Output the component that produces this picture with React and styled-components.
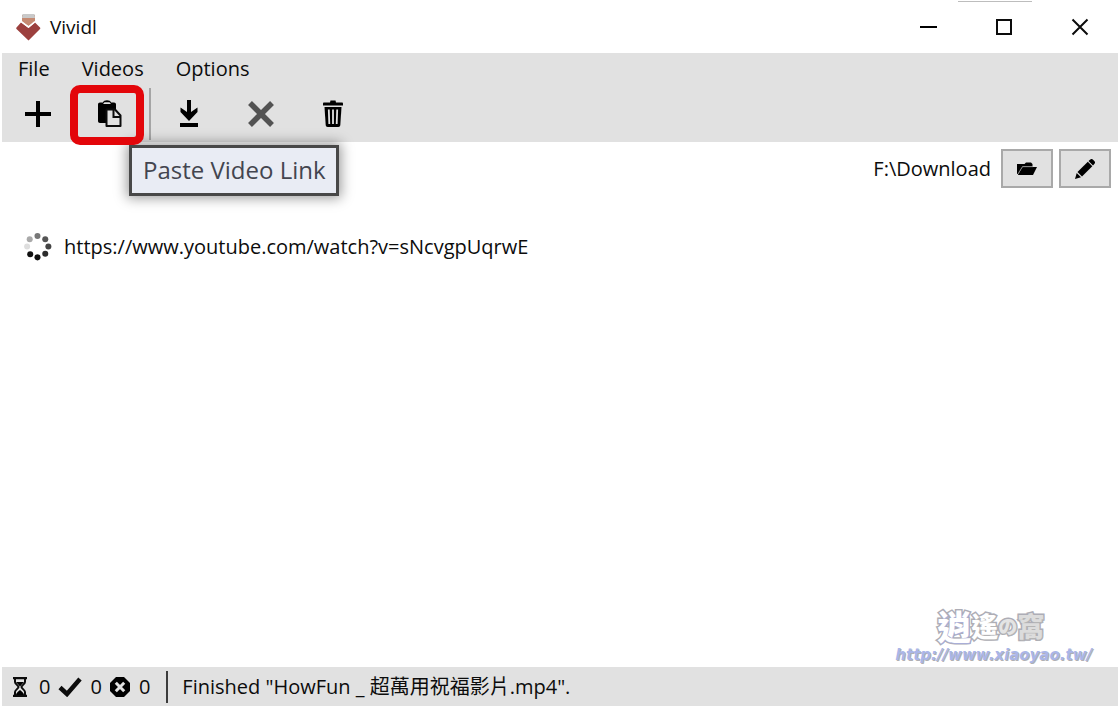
import React from "react";
import styled, { createGlobalStyle } from "styled-components";

const GlobalStyle = createGlobalStyle`
  * {
    box-sizing: border-box;
  }

  body {
    margin: 0;
    background: #ffffff;
    color: #0c0c0c;
    font-family: "Open Sans", "Noto Sans CJK TC", sans-serif;
    font-size: 20px;
    line-height: 28px;
  }

  button {
    padding: 0;
    border: none;
    background: none;
    color: inherit;
    font: inherit;
  }

  svg {
    display: block;
    flex: none;
  }
`;

const Window = styled.div`
  display: flex;
  flex-direction: column;
  min-height: 100vh;
  padding: 0 2px 2px;
`;

const TitleBar = styled.header`
  display: flex;
  align-items: center;
  height: 53px;
  padding-left: 13px;
`;

const Title = styled.h1`
  flex: 1;
  margin: 0 0 0 9px;
  font-size: 19px;
  font-weight: 400;
`;

const CaptionButton = styled.button`
  position: relative;
  display: flex;
  align-items: center;
  justify-content: center;
  width: 76px;
  height: 53px;

  &::before {
    content: "";
    position: absolute;
    top: 1px;
    left: -8px;
    width: 74px;
    height: 1px;
    background: ${(props) => (props.$edge ? "#bdbdbd" : "transparent")};
  }
`;

const Bars = styled.div`
  background: #e1e1e1;
`;

const MenuBar = styled.nav`
  display: flex;
  height: 32px;
`;

const MenuItem = styled.button`
  padding: 0 16px;
`;

const ToolBar = styled.div`
  display: flex;
  align-items: center;
  height: 57px;
`;

const ToolSlot = styled.div`
  position: relative;
`;

const ToolButton = styled.button`
  display: flex;
  align-items: center;
  justify-content: center;
  width: 72px;
  height: 57px;
`;

const Separator = styled.div`
  width: 2px;
  height: 52px;
  margin: 0 2px 0 3px;
  background: #a5a5a5;
`;

const Highlight = styled.div`
  position: absolute;
  top: 0;
  left: -4px;
  width: 74px;
  height: 60px;
  border: 8px solid #e3060a;
  border-radius: 10px;
  pointer-events: none;
  z-index: 2;
`;

const Tooltip = styled.div`
  position: absolute;
  top: 60px;
  left: 55px;
  padding: 6px 10px 7px 11px;
  border: 3px solid #484848;
  background: #e9ecf4;
  color: #43454f;
  font-size: 24px;
  line-height: 32px;
  white-space: nowrap;
  box-shadow: 0 0 12px 2px rgba(0, 0, 0, 0.4);
  z-index: 1;
`;

const Content = styled.main`
  position: relative;
  display: flex;
  flex: 1;
  flex-direction: column;
`;

const PathRow = styled.div`
  display: flex;
  align-items: center;
  justify-content: flex-end;
  gap: 6px;
  padding: 7px 7px 0;
`;

const Path = styled.span`
  margin-right: 4px;
`;

const PathButton = styled.button`
  display: flex;
  align-items: center;
  justify-content: center;
  width: 52px;
  height: 39px;
  border: 2px solid #a9a9a9;
  background: #e1e1e1;
`;

const VideoList = styled.ul`
  margin: 0;
  padding: 45px 22px;
  list-style: none;
`;

const VideoRow = styled.li`
  display: flex;
  align-items: center;
  gap: 12px;
`;

const Watermark = styled.div`
  position: absolute;
  right: 26px;
  bottom: 1px;
  text-align: center;
`;

const WatermarkName = styled.div`
  display: flex;
  align-items: center;
  justify-content: center;
  padding-right: 6px;
  font-family: "Noto Sans CJK TC", sans-serif;
  font-weight: 900;
  line-height: 36px;
  -webkit-text-stroke: 3px #adadb6;
  paint-order: stroke fill;
`;

const WatermarkChar = styled.span`
  font-size: ${(props) => props.$size}px;
  color: ${(props) => props.$color || "#ffffff"};
  text-shadow: 1px 1px 0 ${(props) => props.$shadow || "#b5b5b5"};
`;

const WatermarkLink = styled.a`
  display: block;
  color: #aab6e8;
  font-family: "DejaVu Sans", sans-serif;
  font-size: 15px;
  font-style: italic;
  font-weight: 700;
  line-height: 22px;
  text-decoration: none;
  text-shadow: 1px 1px 0 #b0b0b4;
`;

const StatusBar = styled.footer`
  display: flex;
  align-items: center;
  height: 39px;
  padding-left: 10px;
  background: #e1e1e1;
`;

const Counter = styled.span`
  display: flex;
  align-items: center;
  gap: ${(props) => props.$gap}px;
  margin-right: 8px;
`;

const StatusDivider = styled.div`
  width: 2px;
  height: 32px;
  margin: 0 14px 0 8px;
  background: #3c3c3c;
`;

const Logo = () => (
  <svg width="26" height="28" viewBox="0 0 26 28">
    <path d="M7 2h13v7l-6.500 4L7 9z" fill="#c58a72" />
    <path d="M7.500 1h12l.5 4H7z" fill="#c9c9c9" />
    <path d="M6 9.500 13.500 15 20 9.500l5 5c.5.500.5 1 0 1.500L13.500 27.500 1.500 16c-.5-.5-.5-1 0-1.500z" fill="#9c403e" />
    <path d="m6.500 8.700 7 5.300 6.500-5.300" fill="none" stroke="#ffffff" strokeWidth="1.500" />
  </svg>
);

const MinimizeIcon = () => (
  <svg width="18" height="18" viewBox="0 0 18 18">
    <path d="M1 8h17v2H1z" />
  </svg>
);

const MaximizeIcon = () => (
  <svg width="18" height="18" viewBox="0 0 18 18">
    <path d="M2 2h14v14H2z" fill="none" stroke="#0c0c0c" strokeWidth="2" />
  </svg>
);

const CloseIcon = () => (
  <svg width="18" height="18" viewBox="0 0 18 18">
    <path d="m1.500 1.500 15 15m0-15-15 15" stroke="#0c0c0c" strokeWidth="2" />
  </svg>
);

const PlusIcon = () => (
  <svg width="26" height="26" viewBox="0 0 26 26">
    <path d="M11 0h4v11h11v4H15v11h-4V15H0v-4h11z" />
  </svg>
);

const PasteIcon = () => (
  <svg width="24" height="28" viewBox="0 0 24 28">
    <path d="M2 2.500h3C5.300 1 7 .300 9 .300S12.700 1 13 2.500h3c1.200 0 2 .8 2 2V10H9v13H2c-1.200 0-2-.8-2-2V4.500c0-1.200.8-2 2-2z" />
    <path d="M5 4h8l-1.500-1.800h-5z" fill="#e1e1e1" />
    <path d="M8.500 9.500H17l5.500 6V26h-14z" fill="#e1e1e1" stroke="#0c0c0c" strokeWidth="2" strokeLinejoin="round" />
    <path d="M15.500 10v7H22" fill="none" stroke="#0c0c0c" strokeWidth="2" />
  </svg>
);

const DownloadIcon = () => (
  <svg width="18" height="28" viewBox="0 0 18 28">
    <path d="M7 0h4v12l6.500-4.500v4.500L9 21 .5 12V7.500L7 12zM0 23h18v4H0z" />
  </svg>
);

const CancelIcon = () => (
  <svg width="26" height="26" viewBox="0 0 26 26">
    <path d="m2 2 22 22m0-22L2 24" stroke="#535353" strokeWidth="5.500" />
  </svg>
);

const TrashIcon = () => (
  <svg width="20" height="28" viewBox="0 0 20 28">
    <path d="M7.500 .500h5l.5 2h6c.6 0 1 .5 1 1.300V5.500H0V3.800c0-.8.400-1.300 1-1.300h6z" />
    <path d="M1.500 7h17l-1.200 18c-.1 1.200-.8 2-2 2H4.700c-1.200 0-1.900-.8-2-2z" />
    <path d="M5.800 9.500 6.300 24M10 9.500V24M14.200 9.500 13.700 24" stroke="#e1e1e1" strokeWidth="1.800" />
  </svg>
);

const FolderIcon = () => (
  <svg width="20" height="14" viewBox="0 0 20 14">
    <path d="M0 12V2h7.500L9 .5h5L15.500 2v2.500H5.500L1 12z" />
    <path d="M5.500 5H20l-4 8H.8z" />
    <path d="M.8 12 5.400 4.700H16" fill="none" stroke="#a0a0a0" strokeWidth=".6" />
  </svg>
);

const PencilIcon = () => (
  <svg width="20" height="20" viewBox="0 0 20 20">
    <path d="m13.500 2 1.800-1.500c.8-.7 1.800-.7 2.500 0l1.700 1.700c.7.700.7 1.700 0 2.500L18 6.500z" />
    <path d="m12.800 2.700 4.500 4.500L7 17.500 2.500 13z" />
    <path d="m1.700 14 4.300 4.300L0 20z" />
  </svg>
);

const dots = [
  { x: 13, y: 3, color: "#777777" },
  { x: 20.500, y: 6, color: "#555555" },
  { x: 23.500, y: 13, color: "#444444" },
  { x: 20.500, y: 20, color: "#2c2c2c" },
  { x: 13, y: 23.500, color: "#101010" },
  { x: 6, y: 20.500, color: "#101010" },
  { x: 3, y: 13, color: "#dedede" },
  { x: 5.500, y: 6, color: "#a9a9a9" },
];

const Spinner = () => (
  <svg width="28" height="28" viewBox="0 0 27 27" role="img" aria-label="Loading">
    {dots.map((dot) => (
      <circle key={`${dot.x}-${dot.y}`} cx={dot.x} cy={dot.y} r="2.900" fill={dot.color} />
    ))}
  </svg>
);

const HourglassIcon = () => (
  <svg width="16" height="20" viewBox="0 0 16 20">
    <path d="M1 1.200h14M1 18.800h14" stroke="#0c0c0c" strokeWidth="2.200" />
    <path d="M3 2v3c0 2 3.500 3.500 3.500 5S3 13 3 15v3M13 2v3c0 2-3.500 3.500-3.500 5s3.500 3 3.500 5v3" fill="none" stroke="#0c0c0c" strokeWidth="2" />
    <path d="M4 5h8L8 9.500zM4 18c0-2.500 2.500-3.500 4-5 1.500 1.500 4 2.500 4 5z" />
  </svg>
);

const CheckIcon = () => (
  <svg width="24" height="20" viewBox="0 0 24 20">
    <path d="m2 10.500 7 6.500L22 2" fill="none" stroke="#0c0c0c" strokeWidth="4.500" />
  </svg>
);

const ErrorIcon = () => (
  <svg width="20" height="20" viewBox="0 0 20 20">
    <path d="M6 0h8l6 6v8l-6 6H6l-6-6V6z" strokeLinejoin="round" />
    <path d="m5.800 5.800 8.400 8.400m0-8.400-8.400 8.400" stroke="#e1e1e1" strokeWidth="3" />
  </svg>
);

const App = () => (
  <>
    <GlobalStyle />
    <Window>
      <TitleBar>
        <Logo />
        <Title>Vividl</Title>
        <CaptionButton aria-label="Minimize">
          <MinimizeIcon />
        </CaptionButton>
        <CaptionButton aria-label="Maximize" $edge>
          <MaximizeIcon />
        </CaptionButton>
        <CaptionButton aria-label="Close">
          <CloseIcon />
        </CaptionButton>
      </TitleBar>

      <Bars>
        <MenuBar>
          <MenuItem>File</MenuItem>
          <MenuItem>Videos</MenuItem>
          <MenuItem>Options</MenuItem>
        </MenuBar>
        <ToolBar role="toolbar">
          <ToolButton aria-label="Add video">
            <PlusIcon />
          </ToolButton>
          <ToolSlot>
            <ToolButton aria-labelledby="paste-tip">
              <PasteIcon />
            </ToolButton>
            <Highlight />
            <Tooltip role="tooltip" id="paste-tip">
              Paste Video Link
            </Tooltip>
          </ToolSlot>
          <Separator />
          <ToolButton aria-label="Download">
            <DownloadIcon />
          </ToolButton>
          <ToolButton aria-label="Cancel">
            <CancelIcon />
          </ToolButton>
          <ToolButton aria-label="Delete">
            <TrashIcon />
          </ToolButton>
        </ToolBar>
      </Bars>

      <Content>
        <PathRow>
          <Path>F:\Download</Path>
          <PathButton aria-label="Open folder">
            <FolderIcon />
          </PathButton>
          <PathButton aria-label="Change folder">
            <PencilIcon />
          </PathButton>
        </PathRow>
        <VideoList>
          <VideoRow>
            <Spinner />
            <span>https://www.youtube.com/watch?v=sNcvgpUqrwE</span>
          </VideoRow>
        </VideoList>
        <Watermark>
          <WatermarkName>
            <WatermarkChar $size={34} $shadow="#a9aed8">逍</WatermarkChar>
            <WatermarkChar $size={27}>遙</WatermarkChar>
            <WatermarkChar $size={19} $color="#e4e4e4">の</WatermarkChar>
            <WatermarkChar $size={27} $color="#dcdcdc">窩</WatermarkChar>
          </WatermarkName>
          <WatermarkLink href="http://www.xiaoyao.tw/">http://www.xiaoyao.tw/</WatermarkLink>
        </Watermark>
      </Content>

      <StatusBar>
        <Counter $gap={11}>
          <HourglassIcon />0
        </Counter>
        <Counter $gap={8}>
          <CheckIcon />0
        </Counter>
        <Counter $gap={9}>
          <ErrorIcon />0
        </Counter>
        <StatusDivider />
        <span>Finished "HowFun _ 超萬用祝福影片.mp4".</span>
      </StatusBar>
    </Window>
  </>
);

export default App;
